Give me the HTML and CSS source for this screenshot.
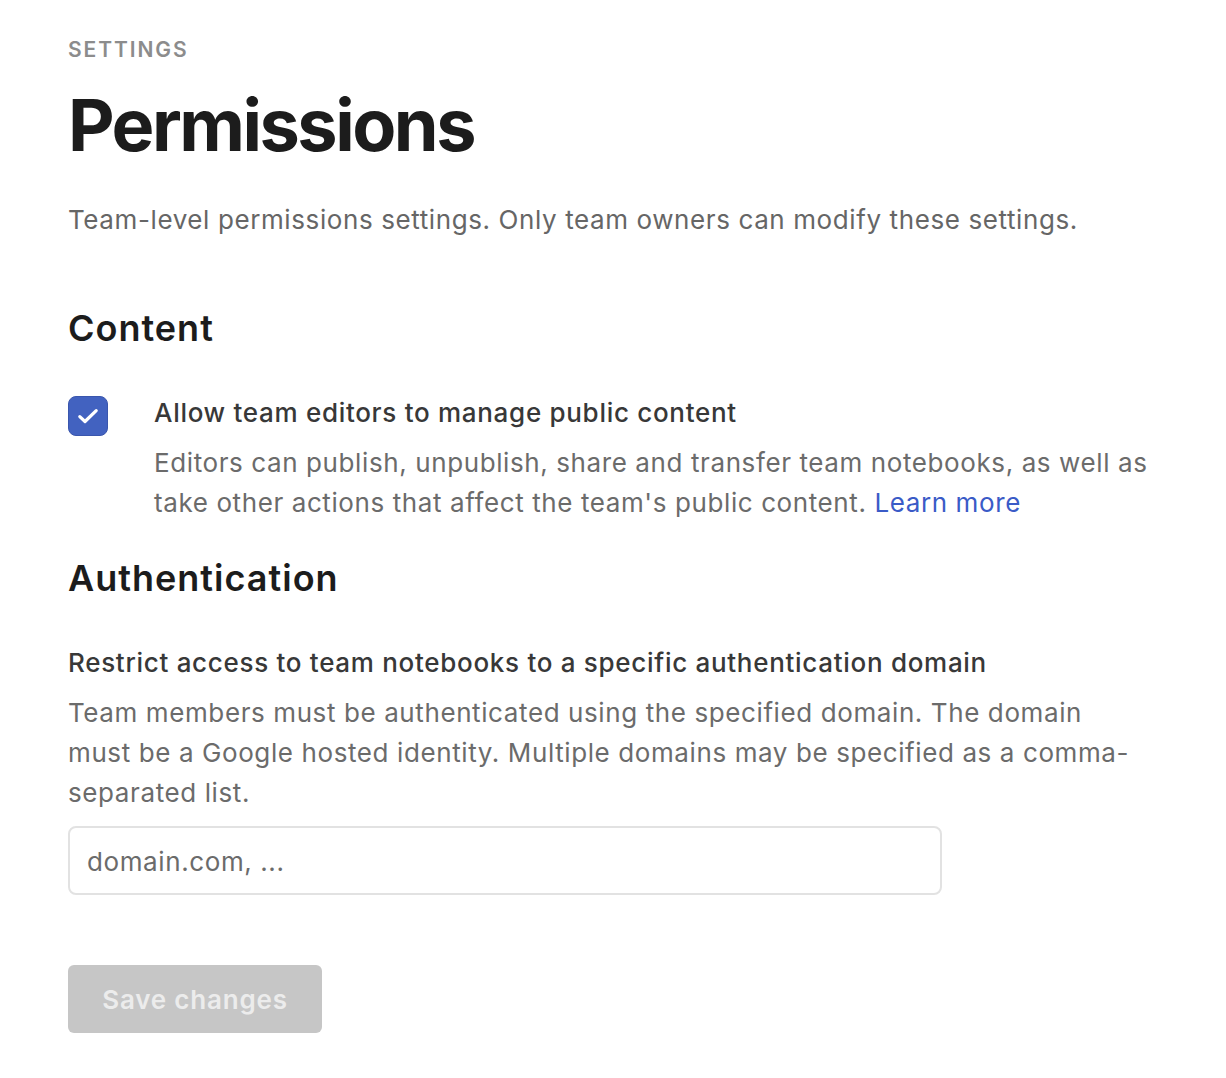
FILE: index.html
```html
<!DOCTYPE html>
<html lang="en">
<head>
<meta charset="utf-8">
<title>Permissions</title>
<link rel="stylesheet" href="styles.css">
</head>
<body>
<main class="page">
  <div class="eyebrow">SETTINGS</div>
  <h1 class="title">Permissions</h1>
  <p class="lead">Team-level permissions settings. Only team owners can modify these settings.</p>

  <section class="section">
    <h2 class="section-title">Content</h2>
    <div class="check-row">
      <span class="checkbox">
        <svg width="22" height="22" viewBox="0 0 22 22" fill="none"><path d="M2.8 11.6l5.2 4.9L19.2 5.6" stroke="#fff" stroke-width="3.2" stroke-linecap="round" stroke-linejoin="round"/></svg>
      </span>
      <div class="check-text">
        <div class="option-label">Allow team editors to manage public content</div>
        <p class="option-desc">Editors can publish, unpublish, share and transfer team notebooks, as well as take other actions that affect the team's public content. <a class="link" href="#">Learn more</a></p>
      </div>
    </div>
  </section>

  <section class="section auth">
    <h2 class="section-title">Authentication</h2>
    <div class="option-label sub">Restrict access to team notebooks to a specific authentication domain</div>
    <p class="option-desc">Team members must be authenticated using the specified domain. The domain must be a Google hosted identity. Multiple domains may be specified as a comma-separated list.</p>
    <input class="domain-input" type="text" placeholder="domain.com, ...">
  </section>

  <button class="save-btn" disabled>Save changes</button>
</main>
</body>
</html>
```

FILE: styles.css
```css
* { box-sizing: border-box; }
html, body { margin: 0; background: #fff; }
body {
  font-family: Inter, "Noto Sans", "Liberation Sans", sans-serif;
  color: #1c1c1c;
}
.page {
  padding: 36px 0 0 68px;
  width: 1150px;
}
.eyebrow {
  font-size: 21px;
  font-weight: 600;
  letter-spacing: 1.9px;
  color: #8c8c8c;
  line-height: 28px;
}
.title {
  margin: 21px 0 0;
  font-size: 72px;
  font-weight: 700;
  line-height: 80px;
  letter-spacing: -2.5px;
  color: #1c1c1c;
}
.lead {
  margin: 37px 0 0;
  font-size: 26px;
  line-height: 36px;
  letter-spacing: 0.6px;
  color: #666;
}
.section-title {
  margin: 0;
  font-size: 36px;
  font-weight: 600;
  line-height: 44px;
  letter-spacing: 1px;
  color: #1c1c1c;
}
.section { margin-top: 68px; }
.check-row {
  display: flex;
  gap: 46px;
  margin-top: 43px;
}
.checkbox {
  flex: none;
  margin-top: 3px;
  width: 40px;
  height: 40px;
  border-radius: 8px;
  background: #4262c0;
  border: 1px solid #3a56ad;
  display: flex;
  align-items: center;
  justify-content: center;
}
.check-text { flex: 1; }
.option-label {
  font-size: 26px;
  font-weight: 500;
  line-height: 40px;
  letter-spacing: 0.7px;
  color: #383838;
}
.option-desc {
  margin: 10px 0 0;
  font-size: 26px;
  line-height: 40px;
  letter-spacing: 0.6px;
  color: #6b6b6b;
}
.link { color: #3a5bc7; text-decoration: none; }
.auth { margin-top: 33px; }
.sub { margin-top: 43px; }
.domain-input {
  display: block;
  margin-top: 13px;
  width: 874px;
  height: 69px;
  border: 2px solid #e2e2e2;
  border-radius: 8px;
  padding: 2px 17px 0;
  font-family: inherit;
  font-size: 26px;
  letter-spacing: 0.6px;
  color: #333;
  background: #fff;
  outline: none;
}
.domain-input::placeholder { color: #6b6b6b; }
.save-btn {
  display: block;
  margin-top: 70px;
  width: 254px;
  height: 68px;
  border: none;
  border-radius: 6px;
  background: #c6c6c6;
  color: #ececec;
  font-family: inherit;
  font-size: 26px;
  font-weight: 600;
  letter-spacing: 0.8px;
  padding: 0;
}
```
